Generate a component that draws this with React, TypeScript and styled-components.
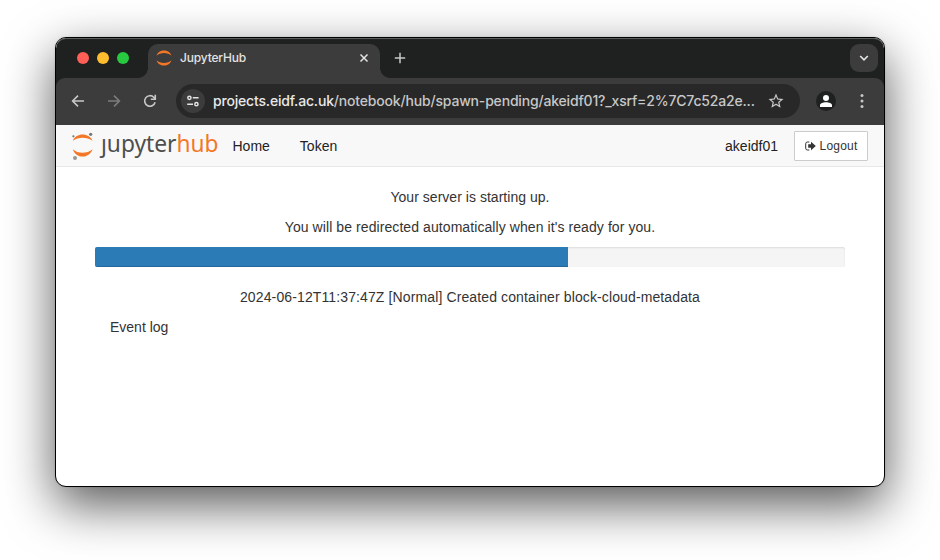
import React from "react";
import styled, { createGlobalStyle } from "styled-components";

const GlobalStyle = createGlobalStyle`
  *, *::before, *::after { box-sizing: border-box; }
  html, body { margin: 0; background: #fff; overflow: hidden; }
  body { font-family: "Liberation Sans", Arial, sans-serif; font-size: 14px; line-height: 20px; color: #333; }
  svg { display: block; flex: none; }
`;

const Desktop = styled.div`
  width: 940px;
  height: 560px;
  padding: 37px 55px;
  overflow: hidden;
`;

const Window = styled.div`
  display: flex;
  flex-direction: column;
  width: 830px;
  height: 450px;
  border: 1px solid #000;
  border-radius: 11px;
  background: #fff;
  overflow: hidden;
  box-shadow: 0 18px 50px rgba(0, 0, 0, 0.66), 0 0 2px rgba(0, 0, 0, 0.15);
`;

const TabStrip = styled.div`
  display: flex;
  align-items: flex-end;
  height: 40px;
  padding: 0 6px 0 21px;
  background: #1f2120;
  border-radius: 10px 10px 0 0;
  box-shadow: inset 0 1px 0 #5b5c5c;
`;

const Lights = styled.div`
  display: flex;
  gap: 8px;
  width: 71px;
  height: 40px;
  align-items: center;
`;

const Light = styled.span<{ $color: string }>`
  width: 12px;
  height: 12px;
  border-radius: 50%;
  background: ${(p) => p.$color};
`;

const Tab = styled.div`
  position: relative;
  display: flex;
  align-items: center;
  width: 232px;
  height: 34px;
  padding: 0 11px 6px 8px;
  border-radius: 10px 10px 0 0;
  background: #3c3c3c;
  color: #e3e3e3;

  &::before, &::after {
    content: "";
    position: absolute;
    bottom: 0;
    width: 10px;
    height: 10px;
  }
  &::before { left: -10px; background: radial-gradient(circle at 0 0, transparent 9.5px, #3c3c3c 10.2px); }
  &::after { right: -10px; background: radial-gradient(circle at 100% 0, transparent 9.5px, #3c3c3c 10.2px); }
`;

const TabTitle = styled.span`
  flex: 1;
  margin-left: 8px;
  font: 500 12px/16px Inter, sans-serif;
  letter-spacing: -0.18px;
`;

const NewTab = styled.div`
  margin: 0 auto 0 14px;
  height: 26px;
`;

const TabSearch = styled.div`
  display: grid;
  place-items: center;
  width: 28px;
  height: 28px;
  margin-bottom: 6px;
  border-radius: 9px;
  background: #3c3c3c;
`;

const ToolbarBack = styled.div`
  background: #1f2120;
`;

const Toolbar = styled.div`
  display: flex;
  align-items: center;
  height: 47px;
  padding: 0 14px 1px 14px;
  background: #3c3c3c;
  border-radius: 9px 9px 0 0;
`;

const NavIcons = styled.div`
  display: flex;
  gap: 20px;
  width: 106px;
`;

const AddressBar = styled.div`
  display: flex;
  align-items: center;
  width: 624px;
  height: 34px;
  padding: 0 15px 0 5px;
  border-radius: 17px;
  background: #282828;
`;

const SiteInfo = styled.span`
  display: grid;
  place-items: center;
  width: 24px;
  height: 24px;
  border-radius: 50%;
  background: #3c3c3c;
`;

const Url = styled.span`
  flex: 1;
  margin-left: 8px;
  white-space: nowrap;
  font: 500 14px/20px Inter, sans-serif;
  letter-spacing: -0.18px;
  color: #c7c7c7;
`;

const Host = styled.span`
  color: #e8e8e8;
`;

const Profile = styled.span`
  display: grid;
  place-items: center;
  width: 20px;
  height: 20px;
  margin: 0 auto 0 16px;
  border-radius: 50%;
  background: #1f2120;
`;

const Navbar = styled.nav`
  display: flex;
  align-items: center;
  height: 42px;
  padding: 0 16px 0 15px;
  border-bottom: 1px solid #e7e7e7;
  background: #f8f8f8;
  color: #222;
`;

const NavLink = styled.a<{ $gap: number }>`
  margin-left: ${(p) => p.$gap}px;
  padding-top: 1px;
`;

const User = styled.span`
  margin-left: auto;
  padding-top: 1px;
`;

const LogoutButton = styled.button`
  display: flex;
  align-items: center;
  justify-content: center;
  gap: 4px;
  width: 74px;
  height: 30px;
  margin: 1px 0 0 16px;
  padding: 0;
  border: 1px solid #ccc;
  border-radius: 1px;
  background: #fff;
  color: #333;
  font: 12px/18px "Liberation Sans", Arial, sans-serif;
  letter-spacing: 0.2px;
`;

const Content = styled.main`
  padding: 20px 39px 0;
`;

const Message = styled.p<{ $tracking?: number }>`
  margin: 0 0 10px;
  text-align: center;
  letter-spacing: ${(p) => p.$tracking ?? 0.03}px;
`;

const Progress = styled.div`
  height: 20px;
  margin-bottom: 20px;
  border-radius: 2px;
  background: #f5f5f5;
  box-shadow: inset 0 1px 2px rgba(0, 0, 0, 0.1);
  overflow: hidden;
`;

const ProgressFill = styled.div`
  width: 473px;
  height: 20px;
  background: #2b7bb7;
  box-shadow: inset 0 -1px 0 rgba(0, 0, 0, 0.15);
`;

const EventLog = styled.div`
  padding-left: 15px;
`;

const Favicon = () => (
  <svg width="16" height="16" viewBox="0 0 16 16" fill="#f37726">
    <path d="M.6 5.8C2.2-1.3 13.8-1.3 15.4 5.8 11.8 2.2 4.2 2.2.6 5.8Z" />
    <path d="M.6 10.2C2.2 17.3 13.8 17.3 15.4 10.2 11.8 13.8 4.2 13.8.6 10.2Z" />
  </svg>
);

const Logo = () => (
  <svg width="148" height="40" viewBox="0 0 148 40">
    <g fill="#f37726">
      <path d="M1.8 14.8C5 6.4 18 6.4 21.6 14.8 16 10.8 7 10.8 1.8 14.8Z" />
      <path d="M1.8 23.2C5 33 18 33 21.6 23.2 16 28 7 28 1.8 23.2Z" />
    </g>
    <g fill="#767677">
      <circle cx="2.4" cy="10.3" r="1.1" />
      <circle cx="19.7" cy="8.3" r="1.6" />
      <circle cx="4" cy="32" r="2" fill="#989798" />
    </g>
    <g fontFamily="'Noto Sans', sans-serif" fontSize="23">
      <text x="30" y="26.3" fill="#4e4e4e" textLength="75.5" lengthAdjust="spacingAndGlyphs">ȷupyter</text>
      <text x="105.5" y="26.3" fill="#f37726" textLength="42" lengthAdjust="spacingAndGlyphs">hub</text>
    </g>
  </svg>
);

export default function App() {
  return (
    <Desktop>
      <GlobalStyle />
      <Window>
        <TabStrip>
          <Lights>
            <Light $color="#ff5f57" />
            <Light $color="#febc2e" />
            <Light $color="#28c840" />
          </Lights>
          <Tab>
            <Favicon />
            <TabTitle>JupyterHub</TabTitle>
            <svg width="10" height="10" viewBox="0 0 10 10" stroke="#e3e3e3" strokeWidth="1.5">
              <path d="M1.5 1.5l7 7M8.5 1.5l-7 7" />
            </svg>
          </Tab>
          <NewTab>
            <svg width="12" height="12" viewBox="0 0 12 12" stroke="#c7c7c7" strokeWidth="1.5">
              <path d="M6 .8v10.4M.8 6h10.4" />
            </svg>
          </NewTab>
          <TabSearch>
            <svg width="10" height="8" viewBox="0 0 10 8" fill="none" stroke="#e3e3e3" strokeWidth="1.7">
              <path d="M1.2 2l3.8 3.8L8.8 2" />
            </svg>
          </TabSearch>
        </TabStrip>
        <ToolbarBack>
          <Toolbar>
            <NavIcons>
              <svg width="16" height="16" viewBox="0 0 16 16" fill="none" stroke="#c7c7c7" strokeWidth="1.6">
                <path d="M14 8H3M8 2.6L2.6 8 8 13.4" />
              </svg>
              <svg width="16" height="16" viewBox="0 0 16 16" fill="none" stroke="#7c7c7c" strokeWidth="1.6">
                <path d="M2 8h11M8 2.6L13.4 8 8 13.4" />
              </svg>
              <svg width="16" height="16" viewBox="0 0 16 16" fill="none" stroke="#c7c7c7" strokeWidth="1.6">
                <path d="M13.1 9.3A5.3 5.3 0 1 1 11.8 4.3L13.2 5.8M13.3 1.8V6.3H8.8" />
              </svg>
            </NavIcons>
            <AddressBar>
              <SiteInfo>
                <svg width="14" height="12" viewBox="0 0 14 12" fill="none" stroke="#e3e3e3" strokeWidth="1.5">
                  <circle cx="3.4" cy="2.8" r="1.6" />
                  <path d="M6.8 2.8h5.8M1.2 9.2H7" />
                  <circle cx="10.4" cy="9.2" r="1.6" />
                </svg>
              </SiteInfo>
              <Url>
                <Host>projects.eidf.ac.uk</Host>/notebook/hub/spawn-pending/akeidf01?_xsrf=2%7C7c52a2e...
              </Url>
              <svg width="18" height="18" viewBox="0 0 24 24" fill="#c7c7c7">
                <path d="M22 9.24l-7.19-.62L12 2 9.19 8.63 2 9.24l5.46 4.73L5.82 21 12 17.27 18.18 21l-1.63-7.03L22 9.24zM12 15.4l-3.76 2.27 1-4.28-3.32-2.88 4.38-.38L12 6.1l1.71 4.04 4.38.38-3.32 2.88 1 4.28L12 15.4z" />
              </svg>
            </AddressBar>
            <Profile>
              <svg width="12" height="12" viewBox="0 0 12 12" fill="#fff">
                <circle cx="6" cy="3" r="3" />
                <path d="M0 12v-1.8C0 8.2 3 7.2 6 7.2s6 1 6 3V12Z" />
              </svg>
            </Profile>
            <svg width="16" height="16" viewBox="0 0 16 16" fill="#c7c7c7">
              <circle cx="8" cy="2.6" r="1.5" />
              <circle cx="8" cy="8" r="1.5" />
              <circle cx="8" cy="13.4" r="1.5" />
            </svg>
          </Toolbar>
        </ToolbarBack>
        <Navbar>
          <Logo />
          <NavLink $gap={13.5}>Home</NavLink>
          <NavLink $gap={30}>Token</NavLink>
          <User>akeidf01</User>
          <LogoutButton>
            <svg width="11" height="10" viewBox="0 0 11 10">
              <path d="M4.3 1H2.5Q.7 1 .7 2.8v4.4Q.7 9 2.5 9h1.8" fill="none" stroke="#333" />
              <path d="M3.2 3.3H6V.8L10.8 5 6 9.2V6.7H3.2Z" fill="#333" />
            </svg>
            Logout
          </LogoutButton>
        </Navbar>
        <Content>
          <Message>Your server is starting up.</Message>
          <Message $tracking={0.08}>You will be redirected automatically when it's ready for you.</Message>
          <Progress>
            <ProgressFill />
          </Progress>
          <Message $tracking={0.12}>2024-06-12T11:37:47Z [Normal] Created container block-cloud-metadata</Message>
          <EventLog>Event log</EventLog>
        </Content>
      </Window>
    </Desktop>
  );
}
